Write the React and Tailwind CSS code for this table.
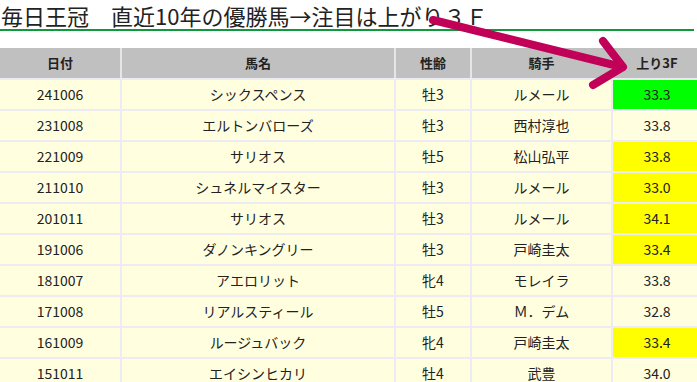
const ROWS = [
  { date: '241006', name: 'シックスペンス', sex: '牡3', jockey: 'ルメール', f3: '33.3', hl: 'green' },
  { date: '231008', name: 'エルトンバローズ', sex: '牡3', jockey: '西村淳也', f3: '33.8' },
  { date: '221009', name: 'サリオス', sex: '牡5', jockey: '松山弘平', f3: '33.8', hl: 'yellow' },
  { date: '211010', name: 'シュネルマイスター', sex: '牡3', jockey: 'ルメール', f3: '33.0', hl: 'yellow' },
  { date: '201011', name: 'サリオス', sex: '牡3', jockey: 'ルメール', f3: '34.1', hl: 'yellow' },
  { date: '191006', name: 'ダノンキングリー', sex: '牡3', jockey: '戸崎圭太', f3: '33.4', hl: 'yellow' },
  { date: '181007', name: 'アエロリット', sex: '牝4', jockey: 'モレイラ', f3: '33.8' },
  { date: '171008', name: 'リアルスティール', sex: '牡5', jockey: 'Ｍ．デム', f3: '32.8' },
  { date: '161009', name: 'ルージュバック', sex: '牝4', jockey: '戸崎圭太', f3: '33.4', hl: 'yellow' },
  { date: '151011', name: 'エイシンヒカリ', sex: '牡4', jockey: '武豊', f3: '34.0' },
];

const COLS = 'grid grid-cols-[122px_274px_76px_141px_88px] w-[701px]';
const FONT = "font-['Noto_Sans_CJK_JP','Noto_Sans',sans-serif]";

export default function App() {
  return (
    <div className={`relative w-[697px] h-[382px] overflow-hidden bg-white text-[#222] ${FONT}`}>
      {/* title */}
      <div className="pl-[1px] pt-[1px] text-[22px] leading-[28px] whitespace-nowrap">
        毎日王冠　直近10年の優勝馬→注目は上がり３Ｆ
      </div>
      <div className="h-[2px] w-[694px] bg-[#10993c]" />

      {/* table */}
      <div className="mt-[17px]">
        <div className={`${COLS} h-[30px] bg-[#c0c0c0] text-[13px] font-bold`}>
          {['日付', '馬名', '性齢', '騎手', '上り3F'].map((h, i) => (
            <div key={h} className={`flex items-center justify-center ${i < 4 ? 'border-r-2 border-[#e6e6e6]' : ''}`}>
              {h}
            </div>
          ))}
        </div>
        {ROWS.map(r => (
          <div key={r.date} className={`${COLS} h-[31px] border-t-2 border-[#ececf2] bg-[#ffffe0] text-[14px]`}>
            <div className="flex items-center justify-center border-r-2 border-[#ececf2]">{r.date}</div>
            <div className="flex items-center justify-center border-r-2 border-[#ececf2]">{r.name}</div>
            <div className="flex items-center justify-center border-r-2 border-[#ececf2]">{r.sex}</div>
            <div className="flex items-center justify-center border-r-2 border-[#ececf2]">{r.jockey}</div>
            <div
              className={`flex items-center justify-center ${
                r.hl === 'green' ? 'bg-[#00ff00]' : r.hl === 'yellow' ? 'bg-[#ffff00]' : ''
              }`}
            >
              {r.f3}
            </div>
          </div>
        ))}
      </div>

      {/* arrow overlay */}
      <svg className="absolute left-0 top-0 pointer-events-none" width="697" height="382">
        <g stroke="#c10058" strokeWidth="8" strokeLinecap="round" strokeLinejoin="round" fill="none">
          <line x1="433" y1="20" x2="622" y2="67" />
          <polyline points="603,41 623,67 593,85" />
        </g>
      </svg>
    </div>
  );
}
